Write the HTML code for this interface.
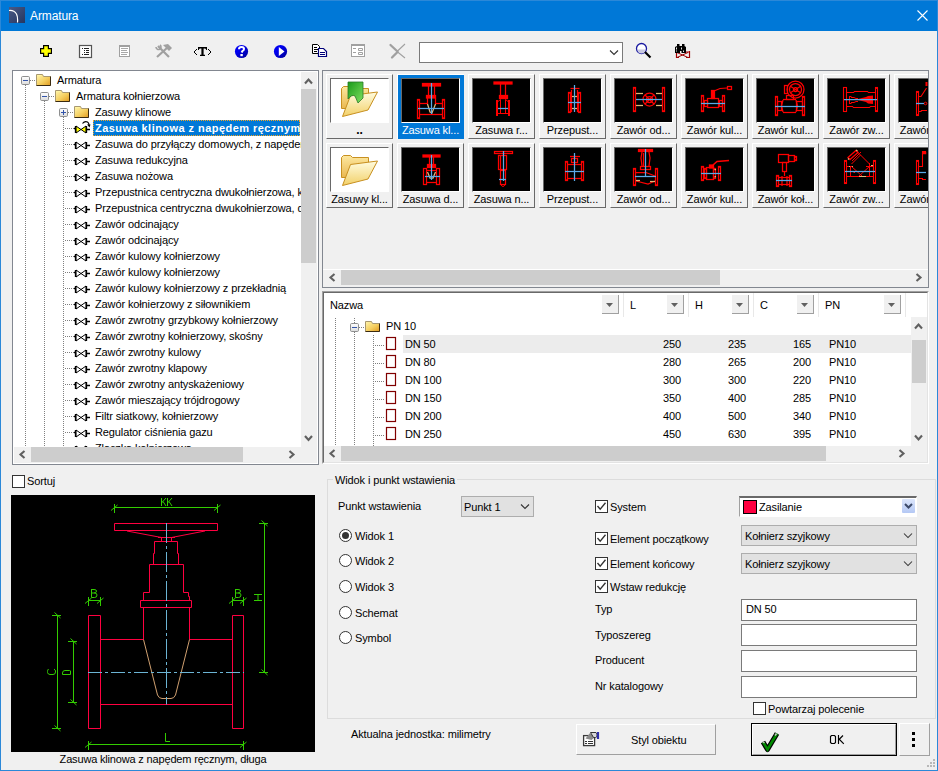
<!DOCTYPE html>
<html><head><meta charset="utf-8"><style>
html,body{margin:0;padding:0;width:938px;height:771px;overflow:hidden;background:#f0f0f0;}
div,svg{position:absolute;}
.t{font-family:"Liberation Sans",sans-serif;font-size:11px;white-space:nowrap;color:#000;letter-spacing:-0.12px;}
</style></head><body>
<div style="left:0px;top:0px;width:938px;height:771px;background:#f0f0f0;"></div>
<div style="left:0px;top:0px;width:938px;height:31px;background:#0078d7;"></div>
<div style="left:0px;top:0px;width:938px;height:1px;background:#2b88d8;"></div>
<div style="left:0px;top:0px;width:1px;height:771px;background:#2b88d8;"></div>
<div style="left:937px;top:0px;width:1px;height:771px;background:#2b88d8;"></div>
<div style="left:0px;top:770px;width:938px;height:1px;background:#2b88d8;"></div>
<svg style="left:9px;top:7px;" width="16" height="16" viewBox="9 7 16 16"><defs><linearGradient id="ig" x1="0" y1="0" x2="1" y2="1"><stop offset="0" stop-color="#4a5a86"/><stop offset="1" stop-color="#253660"/></linearGradient></defs><rect x="9" y="7" width="16" height="16" fill="url(#ig)"/><path d="M9 10.5 Q14 10 16.5 14 Q18 17 17.5 22.5" stroke="#fff" stroke-width="1.2" fill="none"/></svg>
<div class="t" style="left:30px;top:8px;font-size:12px;line-height:16px;color:#fff;">Armatura</div>
<svg style="left:916px;top:9px;" width="12" height="12" viewBox="916 9 12 12"><path d="M917.5 10.5 L927.5 20.5 M927.5 10.5 L917.5 20.5" stroke="#fff" stroke-width="1.1"/></svg>
<svg style="left:0px;top:31px;" width="938" height="33" viewBox="0 31 938 33"><path d="M43 45 H49 V48 H52 V54 H49 V57 H43 V54 H40 V48 H43 Z" fill="#000"/><path d="M44.2 46.2 H47.8 V49.2 H50.8 V52.8 H47.8 V55.8 H44.2 V52.8 H41.2 V49.2 H44.2 Z" fill="#ffff00"/><rect x="79.5" y="45.5" width="12" height="12" fill="#fff" stroke="#555" stroke-width="1.2"/><path d="M82 48.5h1 M84 48.5h5 M84 50.5h1 M86 50.5h3 M84 52.5h1 M86 52.5h3 M82 54.5h1 M84 54.5h5" stroke="#222" stroke-width="1"/><rect x="119.5" y="45.5" width="10" height="11" fill="#fff" stroke="#a0a0a0" stroke-width="1"/><rect x="119" y="45" width="11" height="2" fill="#a0a0a0"/><path d="M121 48.5h7 M121 50.5h6 M121 52.5h7 M121 54.5h6" stroke="#a8a8a8" stroke-width="1"/><path d="M157 57 L168 47" stroke="#a0a0a0" stroke-width="2.2"/><path d="M158 46 L169 57" stroke="#a0a0a0" stroke-width="2.2"/><path d="M163 45 L168 44 L172 48 L169 51 Z" fill="#a0a0a0"/><path d="M156 47 a2.5 2.5 0 1 0 4 -2" stroke="#a0a0a0" stroke-width="1.6" fill="none"/><path d="M198 47 H207 V50 H206.2 Q206 48.6 204.6 48.6 H203.6 V54.8 H205 V56 H200 V54.8 H201.4 V48.6 H200.4 Q199 48.6 198.8 50 H198 Z" fill="#000"/><path d="M197 49 L194 52 L197 55 M208 49 L211 52 L208 55" stroke="#000" stroke-width="1" fill="none"/><defs><linearGradient id="bl" x1="0" y1="0" x2="1" y2="1"><stop offset="0.35" stop-color="#0000f0"/><stop offset="1" stop-color="#000090"/></linearGradient></defs><circle cx="241.5" cy="51.5" r="6.6" fill="url(#bl)"/><path d="M239 49.2 Q239 47 241.5 47 Q244 47 244 49 Q244 50.5 242.3 51.2 L241.6 52.5" stroke="#fff" stroke-width="2" fill="none"/><rect x="240.4" y="54" width="2.4" height="2.2" fill="#fff"/><circle cx="280.5" cy="51.5" r="6.6" fill="url(#bl)"/><path d="M278.8 47 L284.5 51.5 L278.8 56 Z" fill="#fff"/><path d="M312.5 44.5 h5 l2 2 v7 h-7 z" fill="#fff" stroke="#000" stroke-width="1"/><path d="M314 47.5h3 M314 49.5h4 M314 51.5h3" stroke="#000" stroke-width="1"/><path d="M318.5 48.5 h5 l3 3 v5 h-8 z" fill="#fff" stroke="#00007a" stroke-width="1.2"/><path d="M320 52.5h5 M320 54.5h5" stroke="#00007a" stroke-width="1"/><rect x="351.5" y="45.5" width="13" height="11" fill="#fff" stroke="#a0a0a0" stroke-width="1"/><rect x="351" y="44" width="14" height="2" fill="#a0a0a0"/><path d="M353 48.5h3 M353 52.5h3 M358.5 48.5h4v2h-4z M358.5 52.5h4v2h-4z" stroke="#a0a0a0" stroke-width="1" fill="none"/><path d="M390.5 45 L397.5 51.5 M392 57.5 L397.5 52" stroke="#a0a0a0" stroke-width="2.3" stroke-linecap="round"/><path d="M397 51.5 L405 44 M397 51.5 L405 58" stroke="#a0a0a0" stroke-width="1.1"/><circle cx="641.5" cy="48.5" r="5" fill="#fff" stroke="#1a1aa0" stroke-width="1.3"/><path d="M637.5 49.5 h8 a4 4 0 0 1 -8 0z" fill="#c8c8e0"/><path d="M645 52 L650.5 57.5" stroke="#000" stroke-width="2.2"/><path d="M676.5 52 V58 M689.5 51 V58" stroke="#a00000" stroke-width="1.2" fill="none"/><path d="M677 52.5 L688 57.5 M677 57.5 L688 52.5 M677 57.5 H679 M686 52 H689 M686 57.5 H689" stroke="#a00000" stroke-width="1" fill="none"/><path d="M677 44 H679.5 V46 H682 V44 H684.5 V46 L686 47 V53 H681.5 V51 H680 V53 H675 V47 L677 46 Z" fill="#000"/><path d="M676.5 47.5 V49.5 M681.5 47.5 V49.5 M676.5 50.5 V51.5 M683.5 50.5 V52" stroke="#fff" stroke-width="0.9"/></svg>
<div style="left:419px;top:42px;width:204px;height:21px;background:#fff;border:1px solid #7a7a7a;box-sizing:border-box;"></div>
<svg style="left:606px;top:46px;" width="14" height="12" viewBox="606 46 14 12"><path d="M610 50.5 L614 54.5 L618 50.5" stroke="#333" stroke-width="1.1" fill="none"/></svg>
<div style="left:12px;top:70px;width:307px;height:395px;background:#fff;border:1px solid #828790;box-sizing:border-box;"></div>
<div style="left:13px;top:71px;width:288px;height:376px;overflow:hidden"><div style="left:-13px;top:-71px;width:938px;height:771px">
<div class="t" style="left:57px;top:72px;line-height:16px;">Armatura</div>
<div class="t" style="left:76px;top:88px;line-height:16px;">Armatura kołnierzowa</div>
<div class="t" style="left:95px;top:104px;line-height:16px;">Zasuwy klinowe</div>
<div style="left:93px;top:120px;width:207px;height:16px;background:#0078d7;"></div>
<div style="left:93px;top:120px;width:207px;height:16px;box-sizing:border-box;border:1px dotted #f5a623;"></div>
<div class="t" style="left:95px;top:120px;line-height:16px;color:#fff;font-weight:bold;letter-spacing:0.45px;">Zasuwa klinowa z napędem ręcznym</div>
<div class="t" style="left:95px;top:136px;line-height:16px;">Zasuwa do przyłączy domowych, z napędem ręcznym</div>
<div class="t" style="left:95px;top:152px;line-height:16px;">Zasuwa redukcyjna</div>
<div class="t" style="left:95px;top:168px;line-height:16px;">Zasuwa nożowa</div>
<div class="t" style="left:95px;top:184px;line-height:16px;">Przepustnica centryczna dwukołnierzowa, krótka</div>
<div class="t" style="left:95px;top:200px;line-height:16px;">Przepustnica centryczna dwukołnierzowa, długa</div>
<div class="t" style="left:95px;top:216px;line-height:16px;">Zawór odcinający</div>
<div class="t" style="left:95px;top:232px;line-height:16px;">Zawór odcinający</div>
<div class="t" style="left:95px;top:248px;line-height:16px;">Zawór kulowy kołnierzowy</div>
<div class="t" style="left:95px;top:264px;line-height:16px;">Zawór kulowy kołnierzowy</div>
<div class="t" style="left:95px;top:280px;line-height:16px;">Zawór kulowy kołnierzowy z przekładnią</div>
<div class="t" style="left:95px;top:296px;line-height:16px;">Zawór kołnierzowy z siłownikiem</div>
<div class="t" style="left:95px;top:312px;line-height:16px;">Zawór zwrotny grzybkowy kołnierzowy</div>
<div class="t" style="left:95px;top:328px;line-height:16px;">Zawór zwrotny kołnierzowy, skośny</div>
<div class="t" style="left:95px;top:344px;line-height:16px;">Zawór zwrotny kulowy</div>
<div class="t" style="left:95px;top:360px;line-height:16px;">Zawór zwrotny klapowy</div>
<div class="t" style="left:95px;top:376px;line-height:16px;">Zawór zwrotny antyskażeniowy</div>
<div class="t" style="left:95px;top:392px;line-height:16px;">Zawór mieszający trójdrogowy</div>
<div class="t" style="left:95px;top:408px;line-height:16px;">Filtr siatkowy, kołnierzowy</div>
<div class="t" style="left:95px;top:424px;line-height:16px;">Regulator ciśnienia gazu</div>
<div class="t" style="left:95px;top:440px;line-height:16px;">Złączka kołnierzowa</div>
<svg style="left:13px;top:71px;" width="288" height="376" viewBox="13 71 288 376"><defs><linearGradient id="fg" x1="0" y1="0" x2="1" y2="1"><stop offset="0" stop-color="#fff6b0"/><stop offset="0.55" stop-color="#f5cf60"/><stop offset="1" stop-color="#e09a20"/></linearGradient><linearGradient id="eg" x1="0" y1="0" x2="0" y2="1"><stop offset="0" stop-color="#fff"/><stop offset="1" stop-color="#dcdcdc"/></linearGradient></defs><path d="M25.5 85 V447 M44.5 101 V447 M63.5 117 V447" stroke="#808080" stroke-width="1" stroke-dasharray="1 1"/><rect x="21.5" y="76.5" width="8" height="8" rx="1.2" fill="url(#eg)" stroke="#8e8f8f" stroke-width="1"/><path d="M23 80.5 h5" stroke="#3355aa" stroke-width="1"/><path d="M30 80.5 H36" stroke="#808080" stroke-width="1" stroke-dasharray="1 1"/><path d="M36.5 74.5 h6 l1 2 h7 v9 h-14 z" fill="url(#fg)" stroke="#a89870" stroke-width="1"/><path d="M36.5 85.5 h14 v-9" fill="none" stroke="#3a2a10" stroke-width="1"/><path d="M37.5 75.5 h4" stroke="#fff4a0" stroke-width="1"/><rect x="40.5" y="92.5" width="8" height="8" rx="1.2" fill="url(#eg)" stroke="#8e8f8f" stroke-width="1"/><path d="M42 96.5 h5" stroke="#3355aa" stroke-width="1"/><path d="M49 96.5 H55" stroke="#808080" stroke-width="1" stroke-dasharray="1 1"/><path d="M55.5 90.5 h6 l1 2 h7 v9 h-14 z" fill="url(#fg)" stroke="#a89870" stroke-width="1"/><path d="M55.5 101.5 h14 v-9" fill="none" stroke="#3a2a10" stroke-width="1"/><path d="M56.5 91.5 h4" stroke="#fff4a0" stroke-width="1"/><rect x="59.5" y="108.5" width="8" height="8" rx="1.2" fill="url(#eg)" stroke="#8e8f8f" stroke-width="1"/><path d="M61 112.5 h5" stroke="#3355aa" stroke-width="1"/><path d="M63.5 110 v5" stroke="#3355aa" stroke-width="1"/><path d="M68 112.5 H74" stroke="#808080" stroke-width="1" stroke-dasharray="1 1"/><path d="M74.5 106.5 h6 l1 2 h7 v9 h-14 z" fill="url(#fg)" stroke="#a89870" stroke-width="1"/><path d="M74.5 117.5 h14 v-9" fill="none" stroke="#3a2a10" stroke-width="1"/><path d="M75.5 107.5 h4" stroke="#fff4a0" stroke-width="1"/><path d="M65 128.5 H74" stroke="#808080" stroke-width="1" stroke-dasharray="1 1"/><path d="M76 126 L81 129.5 L76 133 Z M86 126 L81 129.5 L86 133 Z" fill="#ffff00" stroke="#000" stroke-width="1"/><path d="M75.5 126 v7 M86.5 126 v7 M87 129.5 h3 M74 128.5 h1.5" stroke="#000" stroke-width="1.3"/><path d="M75 126.5 h2 M75 132.5 h2 M85 126.5 h2 M85 132.5 h2" stroke="#000" stroke-width="1"/><path d="M82.5 123.5 q2 -2.5 5 -1.5 q1.5 1 1.5 3" fill="none" stroke="#000" stroke-width="1.2"/><path d="M87 124.5 h3.5 l-1 3 z" fill="#000"/><path d="M65 144.5 H74" stroke="#808080" stroke-width="1" stroke-dasharray="1 1"/><path d="M76 142 L81 145.5 L76 149 Z M86 142 L81 145.5 L86 149 Z" fill="none" stroke="#000" stroke-width="1"/><path d="M75.5 142 v7 M86.5 142 v7 M87 145.5 h3 M74 144.5 h1.5" stroke="#000" stroke-width="1.3"/><path d="M75 142.5 h2 M75 148.5 h2 M85 142.5 h2 M85 148.5 h2" stroke="#000" stroke-width="1"/><path d="M65 160.5 H74" stroke="#808080" stroke-width="1" stroke-dasharray="1 1"/><path d="M76 158 L81 161.5 L76 165 Z M86 158 L81 161.5 L86 165 Z" fill="none" stroke="#000" stroke-width="1"/><path d="M75.5 158 v7 M86.5 158 v7 M87 161.5 h3 M74 160.5 h1.5" stroke="#000" stroke-width="1.3"/><path d="M75 158.5 h2 M75 164.5 h2 M85 158.5 h2 M85 164.5 h2" stroke="#000" stroke-width="1"/><path d="M65 176.5 H74" stroke="#808080" stroke-width="1" stroke-dasharray="1 1"/><path d="M76 174 L81 177.5 L76 181 Z M86 174 L81 177.5 L86 181 Z" fill="none" stroke="#000" stroke-width="1"/><path d="M75.5 174 v7 M86.5 174 v7 M87 177.5 h3 M74 176.5 h1.5" stroke="#000" stroke-width="1.3"/><path d="M75 174.5 h2 M75 180.5 h2 M85 174.5 h2 M85 180.5 h2" stroke="#000" stroke-width="1"/><path d="M65 192.5 H74" stroke="#808080" stroke-width="1" stroke-dasharray="1 1"/><path d="M76 190 L81 193.5 L76 197 Z M86 190 L81 193.5 L86 197 Z" fill="none" stroke="#000" stroke-width="1"/><path d="M75.5 190 v7 M86.5 190 v7 M87 193.5 h3 M74 192.5 h1.5" stroke="#000" stroke-width="1.3"/><path d="M75 190.5 h2 M75 196.5 h2 M85 190.5 h2 M85 196.5 h2" stroke="#000" stroke-width="1"/><path d="M65 208.5 H74" stroke="#808080" stroke-width="1" stroke-dasharray="1 1"/><path d="M76 206 L81 209.5 L76 213 Z M86 206 L81 209.5 L86 213 Z" fill="none" stroke="#000" stroke-width="1"/><path d="M75.5 206 v7 M86.5 206 v7 M87 209.5 h3 M74 208.5 h1.5" stroke="#000" stroke-width="1.3"/><path d="M75 206.5 h2 M75 212.5 h2 M85 206.5 h2 M85 212.5 h2" stroke="#000" stroke-width="1"/><path d="M65 224.5 H74" stroke="#808080" stroke-width="1" stroke-dasharray="1 1"/><path d="M76 222 L81 225.5 L76 229 Z M86 222 L81 225.5 L86 229 Z" fill="none" stroke="#000" stroke-width="1"/><path d="M75.5 222 v7 M86.5 222 v7 M87 225.5 h3 M74 224.5 h1.5" stroke="#000" stroke-width="1.3"/><path d="M75 222.5 h2 M75 228.5 h2 M85 222.5 h2 M85 228.5 h2" stroke="#000" stroke-width="1"/><path d="M65 240.5 H74" stroke="#808080" stroke-width="1" stroke-dasharray="1 1"/><path d="M76 238 L81 241.5 L76 245 Z M86 238 L81 241.5 L86 245 Z" fill="none" stroke="#000" stroke-width="1"/><path d="M75.5 238 v7 M86.5 238 v7 M87 241.5 h3 M74 240.5 h1.5" stroke="#000" stroke-width="1.3"/><path d="M75 238.5 h2 M75 244.5 h2 M85 238.5 h2 M85 244.5 h2" stroke="#000" stroke-width="1"/><path d="M65 256.5 H74" stroke="#808080" stroke-width="1" stroke-dasharray="1 1"/><path d="M76 254 L81 257.5 L76 261 Z M86 254 L81 257.5 L86 261 Z" fill="none" stroke="#000" stroke-width="1"/><path d="M75.5 254 v7 M86.5 254 v7 M87 257.5 h3 M74 256.5 h1.5" stroke="#000" stroke-width="1.3"/><path d="M75 254.5 h2 M75 260.5 h2 M85 254.5 h2 M85 260.5 h2" stroke="#000" stroke-width="1"/><path d="M65 272.5 H74" stroke="#808080" stroke-width="1" stroke-dasharray="1 1"/><path d="M76 270 L81 273.5 L76 277 Z M86 270 L81 273.5 L86 277 Z" fill="none" stroke="#000" stroke-width="1"/><path d="M75.5 270 v7 M86.5 270 v7 M87 273.5 h3 M74 272.5 h1.5" stroke="#000" stroke-width="1.3"/><path d="M75 270.5 h2 M75 276.5 h2 M85 270.5 h2 M85 276.5 h2" stroke="#000" stroke-width="1"/><path d="M65 288.5 H74" stroke="#808080" stroke-width="1" stroke-dasharray="1 1"/><path d="M76 286 L81 289.5 L76 293 Z M86 286 L81 289.5 L86 293 Z" fill="none" stroke="#000" stroke-width="1"/><path d="M75.5 286 v7 M86.5 286 v7 M87 289.5 h3 M74 288.5 h1.5" stroke="#000" stroke-width="1.3"/><path d="M75 286.5 h2 M75 292.5 h2 M85 286.5 h2 M85 292.5 h2" stroke="#000" stroke-width="1"/><path d="M65 304.5 H74" stroke="#808080" stroke-width="1" stroke-dasharray="1 1"/><path d="M76 302 L81 305.5 L76 309 Z M86 302 L81 305.5 L86 309 Z" fill="none" stroke="#000" stroke-width="1"/><path d="M75.5 302 v7 M86.5 302 v7 M87 305.5 h3 M74 304.5 h1.5" stroke="#000" stroke-width="1.3"/><path d="M75 302.5 h2 M75 308.5 h2 M85 302.5 h2 M85 308.5 h2" stroke="#000" stroke-width="1"/><path d="M65 320.5 H74" stroke="#808080" stroke-width="1" stroke-dasharray="1 1"/><path d="M76 318 L81 321.5 L76 325 Z M86 318 L81 321.5 L86 325 Z" fill="none" stroke="#000" stroke-width="1"/><path d="M75.5 318 v7 M86.5 318 v7 M87 321.5 h3 M74 320.5 h1.5" stroke="#000" stroke-width="1.3"/><path d="M75 318.5 h2 M75 324.5 h2 M85 318.5 h2 M85 324.5 h2" stroke="#000" stroke-width="1"/><path d="M65 336.5 H74" stroke="#808080" stroke-width="1" stroke-dasharray="1 1"/><path d="M76 334 L81 337.5 L76 341 Z M86 334 L81 337.5 L86 341 Z" fill="none" stroke="#000" stroke-width="1"/><path d="M75.5 334 v7 M86.5 334 v7 M87 337.5 h3 M74 336.5 h1.5" stroke="#000" stroke-width="1.3"/><path d="M75 334.5 h2 M75 340.5 h2 M85 334.5 h2 M85 340.5 h2" stroke="#000" stroke-width="1"/><path d="M65 352.5 H74" stroke="#808080" stroke-width="1" stroke-dasharray="1 1"/><path d="M76 350 L81 353.5 L76 357 Z M86 350 L81 353.5 L86 357 Z" fill="none" stroke="#000" stroke-width="1"/><path d="M75.5 350 v7 M86.5 350 v7 M87 353.5 h3 M74 352.5 h1.5" stroke="#000" stroke-width="1.3"/><path d="M75 350.5 h2 M75 356.5 h2 M85 350.5 h2 M85 356.5 h2" stroke="#000" stroke-width="1"/><path d="M65 368.5 H74" stroke="#808080" stroke-width="1" stroke-dasharray="1 1"/><path d="M76 366 L81 369.5 L76 373 Z M86 366 L81 369.5 L86 373 Z" fill="none" stroke="#000" stroke-width="1"/><path d="M75.5 366 v7 M86.5 366 v7 M87 369.5 h3 M74 368.5 h1.5" stroke="#000" stroke-width="1.3"/><path d="M75 366.5 h2 M75 372.5 h2 M85 366.5 h2 M85 372.5 h2" stroke="#000" stroke-width="1"/><path d="M65 384.5 H74" stroke="#808080" stroke-width="1" stroke-dasharray="1 1"/><path d="M76 382 L81 385.5 L76 389 Z M86 382 L81 385.5 L86 389 Z" fill="none" stroke="#000" stroke-width="1"/><path d="M75.5 382 v7 M86.5 382 v7 M87 385.5 h3 M74 384.5 h1.5" stroke="#000" stroke-width="1.3"/><path d="M75 382.5 h2 M75 388.5 h2 M85 382.5 h2 M85 388.5 h2" stroke="#000" stroke-width="1"/><path d="M65 400.5 H74" stroke="#808080" stroke-width="1" stroke-dasharray="1 1"/><path d="M76 398 L81 401.5 L76 405 Z M86 398 L81 401.5 L86 405 Z" fill="none" stroke="#000" stroke-width="1"/><path d="M75.5 398 v7 M86.5 398 v7 M87 401.5 h3 M74 400.5 h1.5" stroke="#000" stroke-width="1.3"/><path d="M75 398.5 h2 M75 404.5 h2 M85 398.5 h2 M85 404.5 h2" stroke="#000" stroke-width="1"/><path d="M65 416.5 H74" stroke="#808080" stroke-width="1" stroke-dasharray="1 1"/><path d="M76 414 L81 417.5 L76 421 Z M86 414 L81 417.5 L86 421 Z" fill="none" stroke="#000" stroke-width="1"/><path d="M75.5 414 v7 M86.5 414 v7 M87 417.5 h3 M74 416.5 h1.5" stroke="#000" stroke-width="1.3"/><path d="M75 414.5 h2 M75 420.5 h2 M85 414.5 h2 M85 420.5 h2" stroke="#000" stroke-width="1"/><path d="M65 432.5 H74" stroke="#808080" stroke-width="1" stroke-dasharray="1 1"/><path d="M76 430 L81 433.5 L76 437 Z M86 430 L81 433.5 L86 437 Z" fill="none" stroke="#000" stroke-width="1"/><path d="M75.5 430 v7 M86.5 430 v7 M87 433.5 h3 M74 432.5 h1.5" stroke="#000" stroke-width="1.3"/><path d="M75 430.5 h2 M75 436.5 h2 M85 430.5 h2 M85 436.5 h2" stroke="#000" stroke-width="1"/><path d="M65 448.5 H74" stroke="#808080" stroke-width="1" stroke-dasharray="1 1"/><path d="M76 446 L81 449.5 L76 453 Z M86 446 L81 449.5 L86 453 Z" fill="none" stroke="#000" stroke-width="1"/><path d="M75.5 446 v7 M86.5 446 v7 M87 449.5 h3 M74 448.5 h1.5" stroke="#000" stroke-width="1.3"/><path d="M75 446.5 h2 M75 452.5 h2 M85 446.5 h2 M85 452.5 h2" stroke="#000" stroke-width="1"/></svg>
</div></div>
<div style="left:301px;top:72px;width:16px;height:375px;background:#f0f0f0;"></div>
<div style="left:301px;top:89px;width:15px;height:174px;background:#cdcdcd;"></div>
<svg style="left:301px;top:72px;" width="17" height="375" viewBox="301 72 17 375"><path d="M305 83.5 L308.5 79.5 L312 83.5" stroke="#606060" stroke-width="2.1" fill="none"/><path d="M305 436 L308.5 440 L312 436" stroke="#606060" stroke-width="2.1" fill="none"/></svg>
<div style="left:14px;top:447px;width:303px;height:16px;background:#f0f0f0;"></div>
<div style="left:31px;top:447px;width:212px;height:15px;background:#cdcdcd;"></div>
<svg style="left:14px;top:447px;" width="304" height="16" viewBox="14 447 304 16"><path d="M24.5 451 L20.5 454.5 L24.5 458" stroke="#606060" stroke-width="2.1" fill="none"/><path d="M289.5 451 L293.5 454.5 L289.5 458" stroke="#606060" stroke-width="2.1" fill="none"/></svg>
<div style="left:322px;top:70px;width:607px;height:218px;background:#f0f0f0;border:1px solid #828790;box-sizing:border-box;"></div>
<div style="left:323px;top:71px;width:605px;height:198px;overflow:hidden"><div style="left:-323px;top:-71px;width:938px;height:771px">
<div style="left:326px;top:74px;width:67px;height:65px;box-sizing:border-box;border-top:1px solid #fff;border-left:1px solid #fff;border-right:1px solid #696969;border-bottom:1px solid #696969;"></div>
<div style="left:330px;top:78px;width:59px;height:45px;background:#fff;box-sizing:border-box;border-top:1px solid #696969;border-left:1px solid #696969;border-right:1px solid #fff;border-bottom:1px solid #fff;"></div>
<div class="t" style="left:326px;top:122px;width:67px;text-align:center;line-height:16px;color:#000;overflow:hidden;font-weight:bold;font-size:12px;">..</div>
<div style="left:397px;top:74px;width:67px;height:65px;background:#0078d7;box-sizing:border-box;border-top:1px solid #fff;border-left:1px solid #fff;"></div>
<div style="left:401px;top:78px;width:59px;height:45px;background:#000;box-sizing:border-box;border-top:1px solid #696969;border-left:1px solid #696969;border-right:1px solid #fff;border-bottom:1px solid #fff;"></div>
<div class="t" style="left:397px;top:122px;width:67px;text-align:center;line-height:16px;color:#fff;overflow:hidden;">Zasuwa kl...</div>
<div style="left:468px;top:74px;width:67px;height:65px;box-sizing:border-box;border-top:1px solid #fff;border-left:1px solid #fff;border-right:1px solid #696969;border-bottom:1px solid #696969;"></div>
<div style="left:472px;top:78px;width:59px;height:45px;background:#000;box-sizing:border-box;border-top:1px solid #696969;border-left:1px solid #696969;border-right:1px solid #fff;border-bottom:1px solid #fff;"></div>
<div class="t" style="left:468px;top:122px;width:67px;text-align:center;line-height:16px;color:#000;overflow:hidden;">Zasuwa r...</div>
<div style="left:539px;top:74px;width:67px;height:65px;box-sizing:border-box;border-top:1px solid #fff;border-left:1px solid #fff;border-right:1px solid #696969;border-bottom:1px solid #696969;"></div>
<div style="left:543px;top:78px;width:59px;height:45px;background:#000;box-sizing:border-box;border-top:1px solid #696969;border-left:1px solid #696969;border-right:1px solid #fff;border-bottom:1px solid #fff;"></div>
<div class="t" style="left:539px;top:122px;width:67px;text-align:center;line-height:16px;color:#000;overflow:hidden;">Przepust...</div>
<div style="left:610px;top:74px;width:67px;height:65px;box-sizing:border-box;border-top:1px solid #fff;border-left:1px solid #fff;border-right:1px solid #696969;border-bottom:1px solid #696969;"></div>
<div style="left:614px;top:78px;width:59px;height:45px;background:#000;box-sizing:border-box;border-top:1px solid #696969;border-left:1px solid #696969;border-right:1px solid #fff;border-bottom:1px solid #fff;"></div>
<div class="t" style="left:610px;top:122px;width:67px;text-align:center;line-height:16px;color:#000;overflow:hidden;">Zawór od...</div>
<div style="left:681px;top:74px;width:67px;height:65px;box-sizing:border-box;border-top:1px solid #fff;border-left:1px solid #fff;border-right:1px solid #696969;border-bottom:1px solid #696969;"></div>
<div style="left:685px;top:78px;width:59px;height:45px;background:#000;box-sizing:border-box;border-top:1px solid #696969;border-left:1px solid #696969;border-right:1px solid #fff;border-bottom:1px solid #fff;"></div>
<div class="t" style="left:681px;top:122px;width:67px;text-align:center;line-height:16px;color:#000;overflow:hidden;">Zawór kul...</div>
<div style="left:752px;top:74px;width:67px;height:65px;box-sizing:border-box;border-top:1px solid #fff;border-left:1px solid #fff;border-right:1px solid #696969;border-bottom:1px solid #696969;"></div>
<div style="left:756px;top:78px;width:59px;height:45px;background:#000;box-sizing:border-box;border-top:1px solid #696969;border-left:1px solid #696969;border-right:1px solid #fff;border-bottom:1px solid #fff;"></div>
<div class="t" style="left:752px;top:122px;width:67px;text-align:center;line-height:16px;color:#000;overflow:hidden;">Zawór kul...</div>
<div style="left:823px;top:74px;width:67px;height:65px;box-sizing:border-box;border-top:1px solid #fff;border-left:1px solid #fff;border-right:1px solid #696969;border-bottom:1px solid #696969;"></div>
<div style="left:827px;top:78px;width:59px;height:45px;background:#000;box-sizing:border-box;border-top:1px solid #696969;border-left:1px solid #696969;border-right:1px solid #fff;border-bottom:1px solid #fff;"></div>
<div class="t" style="left:823px;top:122px;width:67px;text-align:center;line-height:16px;color:#000;overflow:hidden;">Zawór zw...</div>
<div style="left:894px;top:74px;width:67px;height:65px;box-sizing:border-box;border-top:1px solid #fff;border-left:1px solid #fff;border-right:1px solid #696969;border-bottom:1px solid #696969;"></div>
<div style="left:898px;top:78px;width:59px;height:45px;background:#000;box-sizing:border-box;border-top:1px solid #696969;border-left:1px solid #696969;border-right:1px solid #fff;border-bottom:1px solid #fff;"></div>
<div class="t" style="left:894px;top:122px;width:67px;text-align:center;line-height:16px;color:#000;overflow:hidden;">Zawór kul...</div>
<div style="left:326px;top:143px;width:67px;height:65px;box-sizing:border-box;border-top:1px solid #fff;border-left:1px solid #fff;border-right:1px solid #696969;border-bottom:1px solid #696969;"></div>
<div style="left:330px;top:147px;width:59px;height:45px;background:#fff;box-sizing:border-box;border-top:1px solid #696969;border-left:1px solid #696969;border-right:1px solid #fff;border-bottom:1px solid #fff;"></div>
<div class="t" style="left:326px;top:191px;width:67px;text-align:center;line-height:16px;color:#000;overflow:hidden;">Zasuwy kl...</div>
<div style="left:397px;top:143px;width:67px;height:65px;box-sizing:border-box;border-top:1px solid #fff;border-left:1px solid #fff;border-right:1px solid #696969;border-bottom:1px solid #696969;"></div>
<div style="left:401px;top:147px;width:59px;height:45px;background:#000;box-sizing:border-box;border-top:1px solid #696969;border-left:1px solid #696969;border-right:1px solid #fff;border-bottom:1px solid #fff;"></div>
<div class="t" style="left:397px;top:191px;width:67px;text-align:center;line-height:16px;color:#000;overflow:hidden;">Zasuwa d...</div>
<div style="left:468px;top:143px;width:67px;height:65px;box-sizing:border-box;border-top:1px solid #fff;border-left:1px solid #fff;border-right:1px solid #696969;border-bottom:1px solid #696969;"></div>
<div style="left:472px;top:147px;width:59px;height:45px;background:#000;box-sizing:border-box;border-top:1px solid #696969;border-left:1px solid #696969;border-right:1px solid #fff;border-bottom:1px solid #fff;"></div>
<div class="t" style="left:468px;top:191px;width:67px;text-align:center;line-height:16px;color:#000;overflow:hidden;">Zasuwa n...</div>
<div style="left:539px;top:143px;width:67px;height:65px;box-sizing:border-box;border-top:1px solid #fff;border-left:1px solid #fff;border-right:1px solid #696969;border-bottom:1px solid #696969;"></div>
<div style="left:543px;top:147px;width:59px;height:45px;background:#000;box-sizing:border-box;border-top:1px solid #696969;border-left:1px solid #696969;border-right:1px solid #fff;border-bottom:1px solid #fff;"></div>
<div class="t" style="left:539px;top:191px;width:67px;text-align:center;line-height:16px;color:#000;overflow:hidden;">Przepust...</div>
<div style="left:610px;top:143px;width:67px;height:65px;box-sizing:border-box;border-top:1px solid #fff;border-left:1px solid #fff;border-right:1px solid #696969;border-bottom:1px solid #696969;"></div>
<div style="left:614px;top:147px;width:59px;height:45px;background:#000;box-sizing:border-box;border-top:1px solid #696969;border-left:1px solid #696969;border-right:1px solid #fff;border-bottom:1px solid #fff;"></div>
<div class="t" style="left:610px;top:191px;width:67px;text-align:center;line-height:16px;color:#000;overflow:hidden;">Zawór od...</div>
<div style="left:681px;top:143px;width:67px;height:65px;box-sizing:border-box;border-top:1px solid #fff;border-left:1px solid #fff;border-right:1px solid #696969;border-bottom:1px solid #696969;"></div>
<div style="left:685px;top:147px;width:59px;height:45px;background:#000;box-sizing:border-box;border-top:1px solid #696969;border-left:1px solid #696969;border-right:1px solid #fff;border-bottom:1px solid #fff;"></div>
<div class="t" style="left:681px;top:191px;width:67px;text-align:center;line-height:16px;color:#000;overflow:hidden;">Zawór kul...</div>
<div style="left:752px;top:143px;width:67px;height:65px;box-sizing:border-box;border-top:1px solid #fff;border-left:1px solid #fff;border-right:1px solid #696969;border-bottom:1px solid #696969;"></div>
<div style="left:756px;top:147px;width:59px;height:45px;background:#000;box-sizing:border-box;border-top:1px solid #696969;border-left:1px solid #696969;border-right:1px solid #fff;border-bottom:1px solid #fff;"></div>
<div class="t" style="left:752px;top:191px;width:67px;text-align:center;line-height:16px;color:#000;overflow:hidden;">Zawór koł...</div>
<div style="left:823px;top:143px;width:67px;height:65px;box-sizing:border-box;border-top:1px solid #fff;border-left:1px solid #fff;border-right:1px solid #696969;border-bottom:1px solid #696969;"></div>
<div style="left:827px;top:147px;width:59px;height:45px;background:#000;box-sizing:border-box;border-top:1px solid #696969;border-left:1px solid #696969;border-right:1px solid #fff;border-bottom:1px solid #fff;"></div>
<div class="t" style="left:823px;top:191px;width:67px;text-align:center;line-height:16px;color:#000;overflow:hidden;">Zawór zw...</div>
<div style="left:894px;top:143px;width:67px;height:65px;box-sizing:border-box;border-top:1px solid #fff;border-left:1px solid #fff;border-right:1px solid #696969;border-bottom:1px solid #696969;"></div>
<div style="left:898px;top:147px;width:59px;height:45px;background:#000;box-sizing:border-box;border-top:1px solid #696969;border-left:1px solid #696969;border-right:1px solid #fff;border-bottom:1px solid #fff;"></div>
<div class="t" style="left:894px;top:191px;width:67px;text-align:center;line-height:16px;color:#000;overflow:hidden;">Zawór kul...</div>
<svg style="left:323px;top:71px;" width="605" height="198" viewBox="323 71 605 198"><defs><linearGradient id="fb" x1="0" y1="0" x2="0" y2="1"><stop offset="0" stop-color="#fde8a0"/><stop offset="1" stop-color="#eab850"/></linearGradient><linearGradient id="ff" x1="0" y1="0" x2="0" y2="1"><stop offset="0" stop-color="#fffce0"/><stop offset="1" stop-color="#f2d068"/></linearGradient><linearGradient id="gr" x1="0" y1="0" x2="1" y2="1"><stop offset="0" stop-color="#1a9a1a"/><stop offset="1" stop-color="#80e060"/></linearGradient></defs><rect x="422.5" y="83.5" width="18" height="2.5" stroke="#ff0000" stroke-width="1.25" fill="#ff0000"/><path d="M428.5 86 L428.5 95" stroke="#ff0000" stroke-width="1.25" fill="none"/><path d="M434.5 86 L434.5 95" stroke="#ff0000" stroke-width="1.25" fill="none"/><rect x="426.5" y="95.5" width="9" height="2.5" stroke="#ff0000" stroke-width="1.25" fill="#ff0000"/><path d="M427.5 98 L427.5 104" stroke="#ff0000" stroke-width="1.25" fill="none"/><path d="M435.5 98 L435.5 104" stroke="#ff0000" stroke-width="1.25" fill="none"/><rect x="417.5" y="99.5" width="2" height="19" stroke="#ff0000" stroke-width="1.25" fill="none"/><rect x="442.5" y="99.5" width="2" height="19" stroke="#ff0000" stroke-width="1.25" fill="none"/><path d="M419.5 103.5 L427.5 103.5" stroke="#ff0000" stroke-width="1.25" fill="none"/><path d="M435.5 103.5 L442.5 103.5" stroke="#ff0000" stroke-width="1.25" fill="none"/><path d="M419.5 114.5 L442.5 114.5" stroke="#ff0000" stroke-width="1.25" fill="none"/><path d="M427.5 104 L430 112 L432 113 L435.5 104" stroke="#e0b878" stroke-width="1.25" fill="none"/><path d="M418 108.5 L444 108.5" stroke="#5aaae8" stroke-width="1.25" fill="none"/><path d="M431.5 83 L431.5 114" stroke="#5aaae8" stroke-width="1.25" fill="none"/><rect x="494" y="82" width="18" height="2" stroke="#ff0000" stroke-width="1.25" fill="#ff0000"/><path d="M500.5 84 L500.5 96" stroke="#ff0000" stroke-width="1.25" fill="none"/><path d="M505.5 84 L505.5 96" stroke="#ff0000" stroke-width="1.25" fill="none"/><rect x="499.5" y="95.5" width="8" height="3" stroke="#ff0000" stroke-width="1.25" fill="#ff0000"/><rect x="496" y="100" width="2" height="16" fill="#ff0000"/><rect x="508" y="100" width="2" height="16" fill="#ff0000"/><path d="M498 101.5 L500.5 99.5 L500.5 113.5" stroke="#ff0000" stroke-width="1" fill="none"/><path d="M505.5 113.5 L505.5 99.5 L508 101.5" stroke="#ff0000" stroke-width="1" fill="none"/><path d="M498 113.5 L508 113.5" stroke="#ff0000" stroke-width="1" fill="none"/><path d="M498 108.5 L508 108.5" stroke="#5aaae8" stroke-width="1.25" fill="none"/><path d="M570.5 88.5 L579.5 88.5" stroke="#ff0000" stroke-width="1.25" fill="none"/><rect x="568.5" y="92.5" width="2" height="20" stroke="#ff0000" stroke-width="1.25" fill="none"/><rect x="578.5" y="92.5" width="2" height="20" stroke="#ff0000" stroke-width="1.25" fill="none"/><path d="M571.5 90 L571.5 112" stroke="#ff0000" stroke-width="1.25" fill="none"/><path d="M577.5 90 L577.5 112" stroke="#ff0000" stroke-width="1.25" fill="none"/><path d="M572 96.5 L577 96.5" stroke="#e0b878" stroke-width="1.25" fill="none"/><path d="M572 108.5 L577 108.5" stroke="#e0b878" stroke-width="1.25" fill="none"/><path d="M574.5 85 L574.5 112" stroke="#5aaae8" stroke-width="1.25" fill="none"/><path d="M568 102.5 L581 102.5" stroke="#5aaae8" stroke-width="1.25" fill="none"/><rect x="633.5" y="87.5" width="2" height="24" stroke="#ff0000" stroke-width="1.25" fill="none"/><rect x="662.5" y="87.5" width="2" height="24" stroke="#ff0000" stroke-width="1.25" fill="none"/><circle cx="649.5" cy="99.5" r="6.5" stroke="#ff0000" stroke-width="1.25" fill="none"/><circle cx="649.5" cy="99.5" r="3" stroke="#ff0000" stroke-width="1.25" fill="none"/><path d="M645 95 L654 104" stroke="#ff0000" stroke-width="1.25" fill="none"/><path d="M654 95 L645 104" stroke="#ff0000" stroke-width="1.25" fill="none"/><path d="M636 93.5 L643 93.5" stroke="#e0b878" stroke-width="1.25" fill="none"/><path d="M656 93.5 L662 93.5" stroke="#e0b878" stroke-width="1.25" fill="none"/><path d="M636 105.5 L643 105.5" stroke="#e0b878" stroke-width="1.25" fill="none"/><path d="M656 105.5 L662 105.5" stroke="#e0b878" stroke-width="1.25" fill="none"/><path d="M636 99.5 L662 99.5" stroke="#5aaae8" stroke-width="1.25" fill="none"/><rect x="701.5" y="95.5" width="2" height="16" stroke="#ff0000" stroke-width="1.25" fill="none"/><rect x="722.5" y="95.5" width="2" height="16" stroke="#ff0000" stroke-width="1.25" fill="none"/><rect x="704.5" y="100.5" width="3" height="6" stroke="#ff0000" stroke-width="1.25" fill="none"/><rect x="719.5" y="100.5" width="3" height="6" stroke="#ff0000" stroke-width="1.25" fill="none"/><rect x="707.5" y="98.5" width="11" height="9" stroke="#ff0000" stroke-width="1.25" fill="none"/><rect x="711.5" y="90.5" width="3" height="8" stroke="#ff0000" stroke-width="1.25" fill="#ff0000"/><path d="M714 91 L720 88.5 L727 88" stroke="#ff0000" stroke-width="1.25" fill="none"/><rect x="727.5" y="86.5" width="4" height="3" stroke="#ff0000" stroke-width="1.25" fill="none"/><path d="M701 103.5 L725 103.5" stroke="#5aaae8" stroke-width="1.25" fill="none"/><rect x="775.5" y="96.5" width="2" height="19" stroke="#ff0000" stroke-width="1.25" fill="none"/><rect x="802.5" y="96.5" width="2" height="19" stroke="#ff0000" stroke-width="1.25" fill="none"/><rect x="777.5" y="101.5" width="4" height="9" stroke="#ff0000" stroke-width="1.25" fill="none"/><rect x="796.5" y="101.5" width="6" height="9" stroke="#ff0000" stroke-width="1.25" fill="none"/><path d="M783 99.5 L796 99.5" stroke="#ff0000" stroke-width="1.25" fill="none"/><path d="M783 112.5 L796 112.5" stroke="#ff0000" stroke-width="1.25" fill="none"/><path d="M783 100 L781.5 106 L783 112" stroke="#ff0000" stroke-width="1.25" fill="none"/><path d="M796 100 L797.5 106 L796 112" stroke="#ff0000" stroke-width="1.25" fill="none"/><rect x="786.5" y="95.5" width="7" height="4" stroke="#ff0000" stroke-width="1.25" fill="none"/><circle cx="795.5" cy="89.5" r="8.5" stroke="#ff0000" stroke-width="1.25" fill="none"/><circle cx="795.5" cy="89.5" r="6" stroke="#ff0000" stroke-width="1.25" fill="none"/><circle cx="795.5" cy="89.5" r="2" stroke="#ff0000" stroke-width="1.25" fill="none"/><rect x="784.5" y="85.5" width="3" height="8" stroke="#ff0000" stroke-width="1.25" fill="none"/><path d="M790 86 L801 93" stroke="#ff0000" stroke-width="1.25" fill="none"/><path d="M801 86 L790 93" stroke="#ff0000" stroke-width="1.25" fill="none"/><path d="M775 106.5 L805 106.5" stroke="#5aaae8" stroke-width="1.25" fill="none"/><rect x="843.5" y="87.5" width="3" height="24" stroke="#ff0000" stroke-width="1.1" fill="none"/><rect x="875.5" y="87.5" width="2" height="24" stroke="#ff0000" stroke-width="1.1" fill="none"/><path d="M847 92.5 L853.5 92.5 L854.5 91.5 L867.5 91.5 L868.5 92.5 L875 92.5" stroke="#ff0000" stroke-width="1.05" fill="none"/><path d="M847 106.5 L852.5 106.5 L853.5 107.5 L869.5 107.5 L870.5 106.5 L875 106.5" stroke="#ff0000" stroke-width="1.05" fill="none"/><path d="M851.5 96.5 L849.5 96.5 L849.5 103.5 L851.5 103.5" stroke="#ff0000" stroke-width="1.05" fill="none"/><path d="M851 97.5 L854 97.5 L856 98.5 L858 98.5" stroke="#ff0000" stroke-width="1" fill="none"/><path d="M851 102.5 L854 102.5 L856 101.5 L858 101.5" stroke="#ff0000" stroke-width="1" fill="none"/><path d="M856 99.5 L862 98 L866 97 L868 96 L873 95.5 L873 104 L868 103.5 L866 102 L862 101 Z" fill="#ff0000"/><path d="M844 99.5 L877 99.5" stroke="#5aaae8" stroke-width="1.25" fill="none"/><rect x="916.5" y="91.5" width="2" height="24" stroke="#ff0000" stroke-width="1.1" fill="none"/><path d="M919 96.5 L921 96.5 L926.5 88" stroke="#ff0000" stroke-width="1.1" fill="none"/><rect x="925.5" y="82" width="2" height="4" fill="#ff0000"/><path d="M919 111.5 L921 111.5 L921.5 110.5 L927 110.5" stroke="#ff0000" stroke-width="1.1" fill="none"/><circle cx="925.5" cy="103.5" r="1.3" stroke="#ff0000" stroke-width="1" fill="none"/><path d="M916 103.5 L924 103.5" stroke="#5aaae8" stroke-width="1.25" fill="none"/><rect x="423" y="155" width="17" height="2" stroke="#ff0000" stroke-width="1.25" fill="#ff0000"/><path d="M429.5 157 L429.5 165" stroke="#ff0000" stroke-width="1.25" fill="none"/><path d="M433.5 157 L433.5 165" stroke="#ff0000" stroke-width="1.25" fill="none"/><rect x="427.5" y="164.5" width="8" height="3" stroke="#ff0000" stroke-width="1.25" fill="#ff0000"/><rect x="423.5" y="168.5" width="3" height="16" stroke="#ff0000" stroke-width="1.25" fill="none"/><rect x="436.5" y="168.5" width="3" height="16" stroke="#ff0000" stroke-width="1.25" fill="none"/><path d="M426.5 170.5 L436.5 170.5" stroke="#ff0000" stroke-width="1.25" fill="none"/><path d="M426.5 182.5 L436.5 182.5" stroke="#ff0000" stroke-width="1.25" fill="none"/><path d="M427.5 172 L430 178 L433 178 L435.5 172" stroke="#e0b878" stroke-width="1.25" fill="none"/><path d="M431.5 155 L431.5 180" stroke="#5aaae8" stroke-width="1.25" fill="none"/><path d="M425 176.5 L440 176.5" stroke="#5aaae8" stroke-width="1.25" fill="none"/><rect x="494.5" y="151.5" width="18" height="2" stroke="#ff0000" stroke-width="1.25" fill="none"/><rect x="498.5" y="155.5" width="8" height="14" stroke="#ff0000" stroke-width="1.25" fill="none"/><path d="M500.5 156 L500.5 169" stroke="#ff0000" stroke-width="1.25" fill="none"/><rect x="500.5" y="170.5" width="5" height="14" stroke="#ff0000" stroke-width="1.25" fill="none"/><path d="M500.5 184 Q503 189 505.5 184" stroke="#ff0000" fill="none"/><path d="M503.5 151 L503.5 181" stroke="#5aaae8" stroke-width="1.25" fill="none"/><path d="M499 179.5 L506 179.5" stroke="#5aaae8" stroke-width="1.25" fill="none"/><path d="M570 156.5 L580 156.5" stroke="#ff0000" stroke-width="1.25" fill="none"/><rect x="565.5" y="161.5" width="2" height="19" stroke="#ff0000" stroke-width="1.25" fill="none"/><rect x="581.5" y="161.5" width="2" height="19" stroke="#ff0000" stroke-width="1.25" fill="none"/><path d="M567.5 164.5 L581.5 164.5" stroke="#ff0000" stroke-width="1.25" fill="none"/><path d="M567.5 178.5 L581.5 178.5" stroke="#ff0000" stroke-width="1.25" fill="none"/><rect x="571.5" y="158.5" width="6" height="4" stroke="#ff0000" stroke-width="1.25" fill="none"/><path d="M574.5 153 L574.5 181" stroke="#5aaae8" stroke-width="1.25" fill="none"/><path d="M565 171.5 L584 171.5" stroke="#5aaae8" stroke-width="1.25" fill="none"/><rect x="638.5" y="149.5" width="14" height="2" stroke="#ff0000" stroke-width="1.25" fill="#ff0000"/><path d="M642 152 L641 158 L642 166" stroke="#ff0000" stroke-width="1.25" fill="none"/><path d="M649 152 L650 158 L649 166" stroke="#ff0000" stroke-width="1.25" fill="none"/><path d="M643.5 153 L643.5 166" stroke="#ff0000" stroke-width="1.25" fill="none"/><rect x="640.5" y="166.5" width="10" height="3" stroke="#ff0000" stroke-width="1.25" fill="none"/><rect x="633.5" y="168.5" width="2" height="17" stroke="#ff0000" stroke-width="1.25" fill="none"/><rect x="655.5" y="168.5" width="2" height="17" stroke="#ff0000" stroke-width="1.25" fill="none"/><path d="M636 172.5 L646 172.5 L655 176" stroke="#ff0000" stroke-width="1.25" fill="none"/><path d="M636 181 L648 184 L655 181" stroke="#ff0000" stroke-width="1.25" fill="none"/><path d="M636 180.5 L640 180.5" stroke="#e0b878" stroke-width="1.25" fill="none"/><path d="M650 181.5 L655 181.5" stroke="#e0b878" stroke-width="1.25" fill="none"/><path d="M645.5 149 L645.5 176" stroke="#5aaae8" stroke-width="1.25" fill="none"/><path d="M635 176.5 L656 176.5" stroke="#5aaae8" stroke-width="1.25" fill="none"/><rect x="701.5" y="166.5" width="2" height="14" stroke="#ff0000" stroke-width="1.25" fill="none"/><rect x="718.5" y="166.5" width="2" height="14" stroke="#ff0000" stroke-width="1.25" fill="none"/><rect x="704.5" y="168.5" width="2" height="10" stroke="#ff0000" stroke-width="1.25" fill="none"/><rect x="713.5" y="168.5" width="2" height="10" stroke="#ff0000" stroke-width="1.25" fill="none"/><rect x="706.5" y="167.5" width="7" height="12" stroke="#ff0000" stroke-width="1.25" fill="none"/><rect x="709.5" y="165" width="4" height="3" stroke="#ff0000" stroke-width="1.25" fill="#ff0000"/><path d="M713 165 L717 161.5 L729 160.5" stroke="#ff0000" stroke-width="1.6" fill="none"/><path d="M714.5 169.5 L716 169.5" stroke="#e0b878" stroke-width="1.25" fill="none"/><path d="M714.5 176.5 L716 176.5" stroke="#e0b878" stroke-width="1.25" fill="none"/><path d="M701 173.5 L721 173.5" stroke="#5aaae8" stroke-width="1.25" fill="none"/><rect x="778.5" y="154.5" width="10" height="8" stroke="#ff0000" stroke-width="1.25" fill="none"/><rect x="788.5" y="155.5" width="6" height="6" stroke="#ff0000" stroke-width="1.25" fill="none"/><rect x="794.5" y="156.5" width="2" height="4" stroke="#ff0000" stroke-width="1.25" fill="none"/><rect x="782.5" y="162.5" width="4" height="9" stroke="#ff0000" stroke-width="1.25" fill="none"/><path d="M784.5 171 L784.5 176" stroke="#ff0000" stroke-width="1.25" fill="none"/><rect x="776.5" y="175.5" width="2" height="11" stroke="#ff0000" stroke-width="1.25" fill="none"/><rect x="789.5" y="175.5" width="2" height="11" stroke="#ff0000" stroke-width="1.25" fill="none"/><path d="M778 177.5 L790 177.5" stroke="#ff0000" stroke-width="1.25" fill="none"/><path d="M778 184.5 L790 184.5" stroke="#ff0000" stroke-width="1.25" fill="none"/><path d="M782 176 L782 186" stroke="#ff0000" stroke-width="1.25" fill="none"/><path d="M787 176 L787 186" stroke="#ff0000" stroke-width="1.25" fill="none"/><path d="M776 180.5 L792 180.5" stroke="#5aaae8" stroke-width="1.25" fill="none"/><rect x="844.5" y="160.5" width="2" height="23" stroke="#ff0000" stroke-width="1.1" fill="none"/><rect x="873.5" y="160.5" width="2" height="23" stroke="#ff0000" stroke-width="1.1" fill="none"/><path d="M847 166.5 L851 166.5" stroke="#ff0000" stroke-width="1" fill="none"/><path d="M866 166.5 L873 166.5" stroke="#ff0000" stroke-width="1" fill="none"/><path d="M847 176.5 L873 176.5" stroke="#ff0000" stroke-width="1" fill="none"/><path d="M849 166.5 L853 166.5" stroke="#e0b878" stroke-width="1" fill="none"/><path d="M859 176.5 L866 176.5" stroke="#e0b878" stroke-width="1" fill="none"/><path d="M871 165.5 L873 165.5" stroke="#e0b878" stroke-width="1" fill="none"/><path d="M850.5 166 L850.5 176" stroke="#ff0000" stroke-width="1" fill="none"/><path d="M869.5 163 L869.5 176" stroke="#ff0000" stroke-width="1" fill="none"/><path d="M851.5 164 L860.5 155" stroke="#ff0000" stroke-width="1" fill="none"/><path d="M856.5 151 L869.5 164" stroke="#ff0000" stroke-width="1" fill="none"/><path d="M852 161 L861 152" stroke="#ff0000" stroke-width="1" fill="none"/><path d="M851 166 L862 176" stroke="#ff0000" stroke-width="1" fill="none"/><path d="M870 166 L859 176" stroke="#ff0000" stroke-width="1" fill="none"/><path d="M848 157.5 L856 150.5 L858 152.5 L850 159.5 Z" fill="none" stroke="#ff0000" stroke-width="1.3"/><path d="M848 158.5 L849 159.5" stroke="#e0b878" stroke-width="1.2" fill="none"/><path d="M856 150 L857.5 151" stroke="#e0b878" stroke-width="1.2" fill="none"/><rect x="853.5" y="171.5" width="1.5" height="1.5" fill="#ff0000"/><path d="M845 171.5 L875 171.5" stroke="#5aaae8" stroke-width="1.25" fill="none"/><rect x="916.5" y="160.5" width="2" height="24" stroke="#ff0000" stroke-width="1.1" fill="none"/><path d="M919 166.5 L922.5 166.5 L922.5 151.5 L926 151.5" stroke="#ff0000" stroke-width="1.1" fill="none"/><rect x="923" y="152" width="3" height="2" stroke="#ff0000" stroke-width="0.5" fill="#ff0000"/><path d="M919 178.5 L922.5 178.5 L922.5 179.5 L926 179.5" stroke="#ff0000" stroke-width="1.1" fill="none"/><path d="M916 172.5 L926 172.5" stroke="#5aaae8" stroke-width="1.25" fill="none"/><path d="M341.5 88.5 l2 -2 h7 l2 2 h16 v20 h-27 z" fill="url(#fb)" stroke="#c89020" stroke-width="1"/><path d="M342.5 116.5 L350.5 95.5 L377.5 92 L368 110 Z" fill="url(#ff)" stroke="#c89020" stroke-width="1"/><path d="M348 82 H363 V98 L358 103 L355 96 Q352 94 348 99 Z" fill="url(#gr)" stroke="#2a7a2a" stroke-width="0.8"/><path d="M341.5 157.5 l2 -2 h7 l2 2 h16 v20 h-27 z" fill="url(#fb)" stroke="#c89020" stroke-width="1"/><path d="M342.5 185.5 L350.5 164.5 L377.5 161 L368 179 Z" fill="url(#ff)" stroke="#c89020" stroke-width="1"/></svg>
</div></div>
<div style="left:323px;top:269px;width:605px;height:1px;background:#fff;"></div>
<div style="left:323px;top:270px;width:605px;height:16px;background:#f0f0f0;"></div>
<div style="left:341px;top:270px;width:379px;height:15px;background:#cdcdcd;"></div>
<svg style="left:323px;top:270px;" width="605" height="16" viewBox="323 270 605 16"><path d="M334.5 274 L330.5 277.5 L334.5 281" stroke="#606060" stroke-width="2.1" fill="none"/><path d="M916.5 274 L920.5 277.5 L916.5 281" stroke="#606060" stroke-width="2.1" fill="none"/></svg>
<div style="left:322px;top:291px;width:607px;height:173px;background:#fff;box-sizing:border-box;border-top:1px solid #a0a0a0;border-left:1px solid #a0a0a0;border-right:1px solid #fff;border-bottom:1px solid #fff;"></div>
<div style="left:323px;top:292px;width:605px;height:171px;box-sizing:border-box;border-top:1px solid #696969;border-left:1px solid #696969;border-right:1px solid #e3e3e3;border-bottom:1px solid #e3e3e3;"></div>
<div style="left:324px;top:293px;width:587px;height:153px;overflow:hidden"><div style="left:-324px;top:-293px;width:938px;height:771px">
<div class="t" style="left:330px;top:297px;line-height:16px;">Nazwa</div>
<div style="left:602px;top:295px;width:17px;height:19px;background:#f0f0f0;box-sizing:border-box;border-right:1px solid #a0a0a0;border-bottom:1px solid #a0a0a0;"></div>
<div class="t" style="left:630px;top:297px;line-height:16px;">L</div>
<div style="left:667px;top:295px;width:17px;height:19px;background:#f0f0f0;box-sizing:border-box;border-right:1px solid #a0a0a0;border-bottom:1px solid #a0a0a0;"></div>
<div class="t" style="left:695px;top:297px;line-height:16px;">H</div>
<div style="left:732px;top:295px;width:17px;height:19px;background:#f0f0f0;box-sizing:border-box;border-right:1px solid #a0a0a0;border-bottom:1px solid #a0a0a0;"></div>
<div class="t" style="left:760px;top:297px;line-height:16px;">C</div>
<div style="left:797px;top:295px;width:17px;height:19px;background:#f0f0f0;box-sizing:border-box;border-right:1px solid #a0a0a0;border-bottom:1px solid #a0a0a0;"></div>
<div class="t" style="left:825px;top:297px;line-height:16px;">PN</div>
<div style="left:884px;top:295px;width:17px;height:19px;background:#f0f0f0;box-sizing:border-box;border-right:1px solid #a0a0a0;border-bottom:1px solid #a0a0a0;"></div>
<div style="left:403px;top:335px;width:520px;height:18px;background:#ececec;"></div>
<div class="t" style="left:386px;top:318px;line-height:16px;">PN 10</div>
<div class="t" style="left:405px;top:336px;line-height:16px;">DN 50</div>
<div class="t" style="left:600px;top:336px;width:81px;text-align:right;line-height:16px">250</div>
<div class="t" style="left:680px;top:336px;width:66px;text-align:right;line-height:16px">235</div>
<div class="t" style="left:740px;top:336px;width:71px;text-align:right;line-height:16px">165</div>
<div class="t" style="left:829px;top:336px;line-height:16px;">PN10</div>
<div class="t" style="left:405px;top:354px;line-height:16px;">DN 80</div>
<div class="t" style="left:600px;top:354px;width:81px;text-align:right;line-height:16px">280</div>
<div class="t" style="left:680px;top:354px;width:66px;text-align:right;line-height:16px">265</div>
<div class="t" style="left:740px;top:354px;width:71px;text-align:right;line-height:16px">200</div>
<div class="t" style="left:829px;top:354px;line-height:16px;">PN10</div>
<div class="t" style="left:405px;top:372px;line-height:16px;">DN 100</div>
<div class="t" style="left:600px;top:372px;width:81px;text-align:right;line-height:16px">300</div>
<div class="t" style="left:680px;top:372px;width:66px;text-align:right;line-height:16px">300</div>
<div class="t" style="left:740px;top:372px;width:71px;text-align:right;line-height:16px">220</div>
<div class="t" style="left:829px;top:372px;line-height:16px;">PN10</div>
<div class="t" style="left:405px;top:390px;line-height:16px;">DN 150</div>
<div class="t" style="left:600px;top:390px;width:81px;text-align:right;line-height:16px">350</div>
<div class="t" style="left:680px;top:390px;width:66px;text-align:right;line-height:16px">400</div>
<div class="t" style="left:740px;top:390px;width:71px;text-align:right;line-height:16px">285</div>
<div class="t" style="left:829px;top:390px;line-height:16px;">PN10</div>
<div class="t" style="left:405px;top:408px;line-height:16px;">DN 200</div>
<div class="t" style="left:600px;top:408px;width:81px;text-align:right;line-height:16px">400</div>
<div class="t" style="left:680px;top:408px;width:66px;text-align:right;line-height:16px">500</div>
<div class="t" style="left:740px;top:408px;width:71px;text-align:right;line-height:16px">340</div>
<div class="t" style="left:829px;top:408px;line-height:16px;">PN10</div>
<div class="t" style="left:405px;top:426px;line-height:16px;">DN 250</div>
<div class="t" style="left:600px;top:426px;width:81px;text-align:right;line-height:16px">450</div>
<div class="t" style="left:680px;top:426px;width:66px;text-align:right;line-height:16px">630</div>
<div class="t" style="left:740px;top:426px;width:71px;text-align:right;line-height:16px">395</div>
<div class="t" style="left:829px;top:426px;line-height:16px;">PN10</div>
<svg style="left:324px;top:293px;" width="587" height="153" viewBox="324 293 587 153"><defs><linearGradient id="fg2" x1="0" y1="0" x2="1" y2="1"><stop offset="0" stop-color="#fff6b0"/><stop offset="0.55" stop-color="#f5cf60"/><stop offset="1" stop-color="#e09a20"/></linearGradient><linearGradient id="eg2" x1="0" y1="0" x2="0" y2="1"><stop offset="0" stop-color="#fff"/><stop offset="1" stop-color="#dcdcdc"/></linearGradient></defs><path d="M606 303 h7 l-3.5 4 z" fill="#606060"/><path d="M623.5 293 V317" stroke="#e8e8e8" stroke-width="1"/><path d="M671 303 h7 l-3.5 4 z" fill="#606060"/><path d="M688.5 293 V317" stroke="#e8e8e8" stroke-width="1"/><path d="M736 303 h7 l-3.5 4 z" fill="#606060"/><path d="M753.5 293 V317" stroke="#e8e8e8" stroke-width="1"/><path d="M801 303 h7 l-3.5 4 z" fill="#606060"/><path d="M818.5 293 V317" stroke="#e8e8e8" stroke-width="1"/><path d="M888 303 h7 l-3.5 4 z" fill="#606060"/><path d="M905.5 293 V317" stroke="#e8e8e8" stroke-width="1"/><path d="M335.5 318 V447 M354.5 318 V323 M354.5 332 V447 M373.5 335 V447" stroke="#808080" stroke-width="1" stroke-dasharray="1 1"/><path d="M359 327.5 H365" stroke="#808080" stroke-width="1" stroke-dasharray="1 1"/><rect x="350.5" y="323.5" width="8" height="8" rx="1.2" fill="url(#eg2)" stroke="#8e8f8f" stroke-width="1"/><path d="M352 327.5 h5" stroke="#3355aa" stroke-width="1"/><path d="M365.5 321.5 h6 l1 2 h7 v8 h-14 z" fill="url(#fg2)" stroke="#a89870" stroke-width="1"/><path d="M365.5 331.5 h14 v-8" fill="none" stroke="#3a2a10" stroke-width="1"/><path d="M375 345.5 H385" stroke="#808080" stroke-width="1" stroke-dasharray="1 1"/><rect x="386.5" y="337.5" width="9" height="12" fill="none" stroke="#800000" stroke-width="1.2"/><path d="M375 363.5 H385" stroke="#808080" stroke-width="1" stroke-dasharray="1 1"/><rect x="386.5" y="355.5" width="9" height="12" fill="none" stroke="#800000" stroke-width="1.2"/><path d="M375 381.5 H385" stroke="#808080" stroke-width="1" stroke-dasharray="1 1"/><rect x="386.5" y="373.5" width="9" height="12" fill="none" stroke="#800000" stroke-width="1.2"/><path d="M375 399.5 H385" stroke="#808080" stroke-width="1" stroke-dasharray="1 1"/><rect x="386.5" y="391.5" width="9" height="12" fill="none" stroke="#800000" stroke-width="1.2"/><path d="M375 417.5 H385" stroke="#808080" stroke-width="1" stroke-dasharray="1 1"/><rect x="386.5" y="409.5" width="9" height="12" fill="none" stroke="#800000" stroke-width="1.2"/><path d="M375 435.5 H385" stroke="#808080" stroke-width="1" stroke-dasharray="1 1"/><rect x="386.5" y="427.5" width="9" height="12" fill="none" stroke="#800000" stroke-width="1.2"/></svg>
</div></div>
<div style="left:911px;top:317px;width:16px;height:129px;background:#f0f0f0;"></div>
<div style="left:912px;top:340px;width:14px;height:43px;background:#cdcdcd;"></div>
<div style="left:911px;top:293px;width:16px;height:24px;background:#fff;"></div>
<div style="left:324px;top:446px;width:603px;height:16px;background:#f0f0f0;"></div>
<div style="left:341px;top:446px;width:485px;height:15px;background:#cdcdcd;"></div>
<svg style="left:324px;top:293px;" width="603" height="169" viewBox="324 293 603 169"><path d="M915 328.5 L918.5 324.5 L922 328.5" stroke="#606060" stroke-width="2.1" fill="none"/><path d="M915 435.5 L918.5 439.5 L922 435.5" stroke="#606060" stroke-width="2.1" fill="none"/><path d="M334.5 450 L330.5 453.5 L334.5 457" stroke="#606060" stroke-width="2.1" fill="none"/><path d="M899.5 450 L903.5 453.5 L899.5 457" stroke="#606060" stroke-width="2.1" fill="none"/></svg>
<div style="left:12px;top:475px;width:13px;height:13px;background:#fff;box-sizing:border-box;border:1px solid #333;"></div>
<div class="t" style="left:27px;top:473px;line-height:16px;">Sortuj</div>
<div style="left:11px;top:495px;width:304px;height:257px;background:#000;"></div>
<svg style="left:11px;top:495px;" width="304" height="257" viewBox="11 495 304 257"><path d="M114.5 523.5 L217.5 523.5 L217.5 530.5 L114.5 530.5 L114.5 523.5" stroke="#ff0040" stroke-width="1" fill="none" /><path d="M127 531 L161.5 537.5" stroke="#ff0040" stroke-width="1" fill="none" /><path d="M205 531 L171.5 537.5" stroke="#ff0040" stroke-width="1" fill="none" /><path d="M161.5 537 L161.5 541.5" stroke="#ff0040" stroke-width="1" fill="none" /><path d="M171.5 537 L171.5 541.5" stroke="#ff0040" stroke-width="1" fill="none" /><path d="M158 537.5 L175 537.5" stroke="#ff0040" stroke-width="1" fill="none" /><path d="M153.5 565 L153.5 553.5 L154.5 553.5 L154.5 541.5 L177.5 541.5 L177.5 553.5 L178.5 553.5 L178.5 565" stroke="#ff0040" stroke-width="1" fill="none" /><path d="M143.5 600 L143.5 592.5 L149.5 592.5 L149.5 564.5 L183.5 564.5 L183.5 592.5 L188.5 592.5 L188.5 596.5 L189.5 596.5 L189.5 600" stroke="#ff0040" stroke-width="1" fill="none" /><path d="M140.5 600.5 L191.5 600.5 L191.5 607.5 L140.5 607.5 L140.5 600.5" stroke="#ff0040" stroke-width="1" fill="none" /><path d="M143.5 608 L143.5 639.5 L100 639.5" stroke="#ff0040" stroke-width="1" fill="none" /><path d="M189.5 608 L189.5 639.5 L232 639.5" stroke="#ff0040" stroke-width="1" fill="none" /><path d="M100 704.5 L232 704.5" stroke="#ff0040" stroke-width="1" fill="none" /><path d="M88.5 615.5 L100.5 615.5 L100.5 728.5 L88.5 728.5 L88.5 615.5" stroke="#ff0040" stroke-width="1" fill="none" /><path d="M232.5 615.5 L243.5 615.5 L243.5 728.5 L232.5 728.5 L232.5 615.5" stroke="#ff0040" stroke-width="1" fill="none" /><path d="M143.5 639.5 L157.5 695 Q159 698.5 162 698.5 L171 698.5 Q174 698.5 175.5 695 L189.5 639.5" stroke="#d0a070" stroke-width="1" fill="none"/><path d="M166.5 523 V704.5" stroke="#6cb4d4" stroke-width="1" fill="none" stroke-dasharray="20 3 3 3" stroke-dashoffset="0"/><path d="M88 672.5 H244" stroke="#6cb4d4" stroke-width="1" fill="none" stroke-dasharray="14 3 3 3"/><path d="M114 507.5 L218 507.5" stroke="#33cc00" stroke-width="1" fill="none" /><path d="M114.5 504.0 L114.5 513.0" stroke="#33cc00" stroke-width="1" fill="none" /><path d="M111.0 510.5 L117.5 505.0" stroke="#33cc00" stroke-width="1" fill="none" /><path d="M217.5 504.0 L217.5 513.0" stroke="#33cc00" stroke-width="1" fill="none" /><path d="M214.0 510.5 L220.5 505.0" stroke="#33cc00" stroke-width="1" fill="none" /><path d="M264.5 523 L264.5 673" stroke="#33cc00" stroke-width="1" fill="none" /><path d="M259.0 523.5 L268.0 523.5" stroke="#33cc00" stroke-width="1" fill="none" /><path d="M261.5 520.5 L267.5 526.0" stroke="#33cc00" stroke-width="1" fill="none" /><path d="M259.0 672.5 L268.0 672.5" stroke="#33cc00" stroke-width="1" fill="none" /><path d="M261.5 669.5 L267.5 675.0" stroke="#33cc00" stroke-width="1" fill="none" /><path d="M88 600.5 L101 600.5" stroke="#33cc00" stroke-width="1" fill="none" /><path d="M88.5 597.0 L88.5 606.0" stroke="#33cc00" stroke-width="1" fill="none" /><path d="M85.0 603.5 L91.5 598.0" stroke="#33cc00" stroke-width="1" fill="none" /><path d="M100.5 597.0 L100.5 606.0" stroke="#33cc00" stroke-width="1" fill="none" /><path d="M97.0 603.5 L103.5 598.0" stroke="#33cc00" stroke-width="1" fill="none" /><path d="M232 600.5 L244 600.5" stroke="#33cc00" stroke-width="1" fill="none" /><path d="M232.5 597.0 L232.5 606.0" stroke="#33cc00" stroke-width="1" fill="none" /><path d="M229.0 603.5 L235.5 598.0" stroke="#33cc00" stroke-width="1" fill="none" /><path d="M243.5 597.0 L243.5 606.0" stroke="#33cc00" stroke-width="1" fill="none" /><path d="M240.0 603.5 L246.5 598.0" stroke="#33cc00" stroke-width="1" fill="none" /><path d="M57.5 615 L57.5 729" stroke="#33cc00" stroke-width="1" fill="none" /><path d="M52.0 615.5 L61.0 615.5" stroke="#33cc00" stroke-width="1" fill="none" /><path d="M54.5 612.5 L60.5 618.0" stroke="#33cc00" stroke-width="1" fill="none" /><path d="M52.0 728.5 L61.0 728.5" stroke="#33cc00" stroke-width="1" fill="none" /><path d="M54.5 725.5 L60.5 731.0" stroke="#33cc00" stroke-width="1" fill="none" /><path d="M73.5 641 L73.5 703" stroke="#33cc00" stroke-width="1" fill="none" /><path d="M68.0 641.5 L77.0 641.5" stroke="#33cc00" stroke-width="1" fill="none" /><path d="M70.5 638.5 L76.5 644.0" stroke="#33cc00" stroke-width="1" fill="none" /><path d="M68.0 702.5 L77.0 702.5" stroke="#33cc00" stroke-width="1" fill="none" /><path d="M70.5 699.5 L76.5 705.0" stroke="#33cc00" stroke-width="1" fill="none" /><path d="M88 744.5 L244 744.5" stroke="#33cc00" stroke-width="1" fill="none" /><path d="M88.5 741.0 L88.5 750.0" stroke="#33cc00" stroke-width="1" fill="none" /><path d="M85.0 747.5 L91.5 742.0" stroke="#33cc00" stroke-width="1" fill="none" /><path d="M243.5 741.0 L243.5 750.0" stroke="#33cc00" stroke-width="1" fill="none" /><path d="M240.0 747.5 L246.5 742.0" stroke="#33cc00" stroke-width="1" fill="none" /><path d="M161.5 498 L161.5 506" stroke="#33cc00" stroke-width="1" fill="none" /><path d="M166 498 L161.5 503" stroke="#33cc00" stroke-width="1" fill="none" /><path d="M163 501.5 L166 506" stroke="#33cc00" stroke-width="1" fill="none" /><path d="M167.5 498 L167.5 506" stroke="#33cc00" stroke-width="1" fill="none" /><path d="M172 498 L167.5 503" stroke="#33cc00" stroke-width="1" fill="none" /><path d="M169 501.5 L172 506" stroke="#33cc00" stroke-width="1" fill="none" /><path d="M91.5 589 V597.5 H94.5 Q97 597.5 97 595 Q97 593 94.5 593 H91.5 M94 593 Q96.5 593 96.5 591 Q96.5 589.5 94 589.5 H91.5" stroke="#33cc00" stroke-width="1" fill="none"/><path d="M235.5 589 V597.5 H238.5 Q241 597.5 241 595 Q241 593 238.5 593 H235.5 M238 593 Q240.5 593 240.5 591 Q240.5 589.5 238 589.5 H235.5" stroke="#33cc00" stroke-width="1" fill="none"/><path d="M165.5 733 L165.5 741.5 L170 741.5" stroke="#33cc00" stroke-width="1" fill="none" /><path d="M254 594.5 L262 594.5" stroke="#33cc00" stroke-width="1" fill="none" /><path d="M254 600.5 L262 600.5" stroke="#33cc00" stroke-width="1" fill="none" /><path d="M258 594.5 L258 600.5" stroke="#33cc00" stroke-width="1" fill="none" /><path d="M48.5 669 Q47.5 670 47.5 671.5 V672.5 Q48 674.5 50 674.5 H53 Q55.5 674.5 55.5 672 V671 Q55.5 670 54 669" stroke="#33cc00" stroke-width="1" fill="none"/><path d="M62.5 674.5 H70.5 V671 Q70.5 670.5 69.5 670.5 H65 Q62.5 670.5 62.5 673 Z" stroke="#33cc00" stroke-width="1" fill="none"/></svg>
<div class="t" style="left:11px;top:751px;width:304px;text-align:center;line-height:16px;letter-spacing:-0.17px">Zasuwa klinowa z napędem ręcznym, długa</div>
<div style="left:327px;top:479px;width:609px;height:240px;box-sizing:border-box;border:1px solid #dcdcdc;"></div>
<div class="t" style="left:333px;top:472px;line-height:16px;background:#f0f0f0;padding:0 2px;">Widok i punkt wstawienia</div>
<div class="t" style="left:338px;top:498px;line-height:16px;">Punkt wstawienia</div>
<div style="left:461px;top:496px;width:73px;height:21px;background:#e1e1e1;box-sizing:border-box;border:1px solid #adadad;"></div>
<div class="t" style="left:464px;top:499px;line-height:16px;">Punkt 1</div>
<div class="t" style="left:355px;top:528px;line-height:16px;">Widok 1</div>
<div class="t" style="left:355px;top:553px;line-height:16px;">Widok 2</div>
<div class="t" style="left:355px;top:579px;line-height:16px;">Widok 3</div>
<div class="t" style="left:355px;top:605px;line-height:16px;">Schemat</div>
<div class="t" style="left:355px;top:630px;line-height:16px;">Symbol</div>
<div class="t" style="left:610px;top:499px;line-height:16px;">System</div>
<div class="t" style="left:610px;top:531px;line-height:16px;">Element początkowy</div>
<div class="t" style="left:610px;top:556px;line-height:16px;">Element końcowy</div>
<div class="t" style="left:610px;top:579px;line-height:16px;">Wstaw redukcję</div>
<div style="left:739px;top:496px;width:178px;height:21px;background:#fff;box-sizing:border-box;border-top:2px solid #696969;border-left:1px solid #a0a0a0;border-right:1px solid #fff;border-bottom:1px solid #fff;"></div>
<div style="left:743px;top:500px;width:14px;height:14px;background:#ff0040;box-sizing:border-box;border:1px solid #000;"></div>
<div class="t" style="left:759px;top:499px;line-height:16px;">Zasilanie</div>
<div style="left:902px;top:499px;width:13px;height:14px;background:linear-gradient(#dce6fc,#b4c8f4);border-radius:1px;"></div>
<div style="left:741px;top:525px;width:176px;height:21px;background:#e1e1e1;box-sizing:border-box;border:1px solid #adadad;"></div>
<div class="t" style="left:745px;top:528px;line-height:16px;">Kołnierz szyjkowy</div>
<div style="left:741px;top:553px;width:176px;height:21px;background:#e1e1e1;box-sizing:border-box;border:1px solid #adadad;"></div>
<div class="t" style="left:745px;top:556px;line-height:16px;">Kołnierz szyjkowy</div>
<div class="t" style="left:595px;top:601px;line-height:16px;">Typ</div>
<div style="left:741px;top:599px;width:176px;height:22px;background:#fff;box-sizing:border-box;border:1px solid #7a7a7a;"></div>
<div class="t" style="left:746px;top:601px;line-height:16px;">DN 50</div>
<div class="t" style="left:595px;top:627px;line-height:16px;">Typoszereg</div>
<div style="left:741px;top:624px;width:176px;height:22px;background:#fff;box-sizing:border-box;border:1px solid #7a7a7a;"></div>
<div class="t" style="left:595px;top:652px;line-height:16px;">Producent</div>
<div style="left:741px;top:650px;width:176px;height:22px;background:#fff;box-sizing:border-box;border:1px solid #7a7a7a;"></div>
<div class="t" style="left:595px;top:678px;line-height:16px;">Nr katalogowy</div>
<div style="left:741px;top:676px;width:176px;height:22px;background:#fff;box-sizing:border-box;border:1px solid #7a7a7a;"></div>
<div class="t" style="left:768px;top:701px;line-height:16px;">Powtarzaj polecenie</div>
<svg style="left:327px;top:479px;" width="609" height="240" viewBox="327 479 609 240"><path d="M521 504.5 L525 508.5 L529 504.5" stroke="#333" stroke-width="1.1" fill="none"/><circle cx="345.5" cy="535.5" r="6" fill="#fff" stroke="#333" stroke-width="1"/><circle cx="345.5" cy="535.5" r="3.5" fill="#333"/><circle cx="345.5" cy="560.5" r="6" fill="#fff" stroke="#333" stroke-width="1"/><circle cx="345.5" cy="586.5" r="6" fill="#fff" stroke="#333" stroke-width="1"/><circle cx="345.5" cy="612.5" r="6" fill="#fff" stroke="#333" stroke-width="1"/><circle cx="345.5" cy="637.5" r="6" fill="#fff" stroke="#333" stroke-width="1"/><rect x="595.5" y="500.5" width="12" height="12" fill="#fff" stroke="#333" stroke-width="1"/><path d="M597.5 506 L600.2 509.2 L605.5 502.8" stroke="#333" stroke-width="1.35" fill="none"/><rect x="595.5" y="532.5" width="12" height="12" fill="#fff" stroke="#333" stroke-width="1"/><path d="M597.5 538 L600.2 541.2 L605.5 534.8" stroke="#333" stroke-width="1.35" fill="none"/><rect x="595.5" y="557.5" width="12" height="12" fill="#fff" stroke="#333" stroke-width="1"/><path d="M597.5 563 L600.2 566.2 L605.5 559.8" stroke="#333" stroke-width="1.35" fill="none"/><rect x="595.5" y="580.5" width="12" height="12" fill="#fff" stroke="#333" stroke-width="1"/><path d="M597.5 586 L600.2 589.2 L605.5 582.8" stroke="#333" stroke-width="1.35" fill="none"/><path d="M905 504 L908.5 507.5 L912 504" stroke="#3c4a6a" stroke-width="2" fill="none"/><path d="M904 533.5 L908 537.5 L912 533.5" stroke="#333" stroke-width="1.05" fill="none"/><path d="M904 561.5 L908 565.5 L912 561.5" stroke="#333" stroke-width="1.05" fill="none"/><rect x="753.5" y="702.5" width="12" height="12" fill="#fff" stroke="#333" stroke-width="1"/></svg>
<div class="t" style="left:351px;top:726px;line-height:16px;">Aktualna jednostka: milimetry</div>
<div style="left:576px;top:724px;width:140px;height:31px;background:#f0f0f0;box-sizing:border-box;border-top:1px solid #fff;border-left:1px solid #fff;border-right:1px solid #a0a0a0;border-bottom:1px solid #a0a0a0;"></div>
<div class="t" style="left:631px;top:732px;line-height:16px;">Styl obiektu</div>
<div style="left:751px;top:723px;width:146px;height:33px;background:#f0f0f0;box-sizing:border-box;border:1px solid #000;"></div>
<div style="left:752px;top:724px;width:144px;height:31px;box-sizing:border-box;border-top:1px solid #fff;border-left:1px solid #fff;border-right:1px solid #a0a0a0;border-bottom:1px solid #a0a0a0;"></div>
<div style="left:899px;top:723px;width:31px;height:33px;background:#f0f0f0;box-sizing:border-box;border-top:1px solid #fff;border-left:1px solid #fff;border-right:1px solid #a0a0a0;border-bottom:1px solid #a0a0a0;"></div>
<svg style="left:570px;top:720px;" width="368" height="51" viewBox="570 720 368 51"><path d="M584.5 740 L590 733 L595 738 L589 744 Z" fill="#fff"/><rect x="583.6" y="735.6" width="11" height="10" fill="#fff" stroke="#3a3a3a" stroke-width="1.3"/><path d="M585 741.5 h2 M588 741.5 h5 M585 743.5 h2 M588 743.5 h5" stroke="#333" stroke-width="1.1"/><path d="M585.5 738.5 L590 733 L594.5 737.5 L591.5 740 Z" fill="#8a8a8a"/><path d="M590.5 732.5 H596 L597 734 V736.5 L595.5 737.5 H593.5 Z" fill="#d8d8d8" stroke="#333" stroke-width="1"/><path d="M598 732 V739" stroke="#2e2ea8" stroke-width="2.2"/><path d="M831.5 735.5 H834.5 L835.5 736.5 V742.5 L834.5 743.5 H831.5 L830.5 742.5 V736.5 Z M838.5 735 V744 M839 739.5 L843 735.5 M839 739 L843.8 743.8" stroke="#000" stroke-width="1.15" fill="none"/><path d="M763 742 L767.5 749.5 L777 733.5" stroke="#000" stroke-width="5" fill="none" stroke-linejoin="round"/><path d="M763 742 L767.5 749.5 L777 733.5" stroke="#008a00" stroke-width="2.6" fill="none"/><path d="M762.5 741.5 l2 1.5 M776.5 733.5 l-1.5 2" stroke="#c0c0c0" stroke-width="1.5"/><rect x="912" y="732" width="3" height="3" fill="#000"/><rect x="912" y="738" width="3" height="3" fill="#000"/><rect x="912" y="744" width="3" height="3" fill="#000"/><rect x="933" y="759" width="2" height="2" fill="#b8b8b8"/><rect x="930" y="762" width="2" height="2" fill="#b8b8b8"/><rect x="933" y="762" width="2" height="2" fill="#b8b8b8"/><rect x="927" y="765" width="2" height="2" fill="#b8b8b8"/><rect x="930" y="765" width="2" height="2" fill="#b8b8b8"/><rect x="933" y="765" width="2" height="2" fill="#b8b8b8"/></svg>
</body></html>
